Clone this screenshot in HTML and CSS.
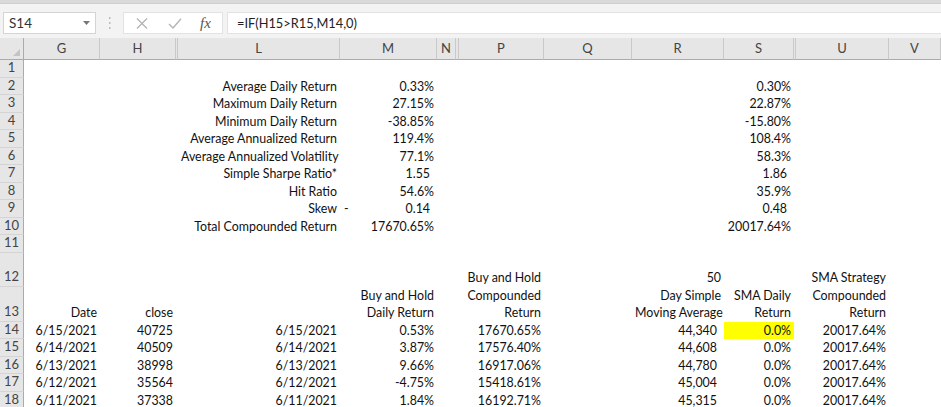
FILE: index.html
```html
<!DOCTYPE html>
<html lang="en">
<head>
    <meta charset="UTF-8">
    <title>SMA Strategy Backtest</title>
    <link rel="stylesheet" href="styles.css">
</head>
<body>
    <div class="ribbon-edge"></div>

    <div class="formula-bar">
        <div class="name-box">
            <span>S14</span>
            <svg class="caret" width="7" height="4" viewBox="0 0 7 4"><path d="M0 0h7L3.5 4z" fill="#777"/></svg>
        </div>
        <svg class="grip" width="3" height="12" viewBox="0 0 3 12">
            <rect x="1" y="0" width="1.5" height="2" fill="#bbb"/>
            <rect x="1" y="5" width="1.5" height="2" fill="#bbb"/>
            <rect x="1" y="10" width="1.5" height="2" fill="#bbb"/>
        </svg>
        <div class="fx-buttons">
            <svg width="12" height="11" viewBox="0 0 12 11"><path d="M1 0.5l10 10M11 0.5l-10 10" stroke="#b4b4b4" stroke-width="1.3" fill="none"/></svg>
            <svg width="14" height="11" viewBox="0 0 14 11"><path d="M1 6l4 4L13 0.8" stroke="#b4b4b4" stroke-width="1.4" fill="none"/></svg>
            <span class="fx">fx</span>
        </div>
        <div class="formula-input">=IF(H15&gt;R15,M14,0)</div>
    </div>

    <div class="sheet">
        <!-- column headers -->
        <div class="corner"><svg width="7" height="7" viewBox="0 0 7 7"><path d="M7 0v7H0z" fill="#c4c4c4"/></svg></div>
        <div class="col-head">G</div>
        <div class="col-head">H</div>
        <div class="col-head"></div>
        <div class="col-head">L</div>
        <div class="col-head">M</div>
        <div class="col-head">N</div>
        <div class="col-head"></div>
        <div class="col-head">P</div>
        <div class="col-head">Q</div>
        <div class="col-head">R</div>
        <div class="col-head">S</div>
        <div class="col-head"></div>
        <div class="col-head">U</div>
        <div class="col-head">V</div>

        <div class="row-head">1</div>

        <div class="row-head">2</div>
        <div class="c r col-l">Average Daily Return</div>
        <div class="c r col-m">0.33%</div>
        <div class="c r col-s">0.30%</div>

        <div class="row-head">3</div>
        <div class="c r col-l">Maximum Daily Return</div>
        <div class="c r col-m">27.15%</div>
        <div class="c r col-s">22.87%</div>

        <div class="row-head">4</div>
        <div class="c r col-l">Minimum Daily Return</div>
        <div class="c r col-m">-38.85%</div>
        <div class="c r col-s">-15.80%</div>

        <div class="row-head">5</div>
        <div class="c r col-l">Average Annualized Return</div>
        <div class="c r col-m">119.4%</div>
        <div class="c r col-s">108.4%</div>

        <div class="row-head">6</div>
        <div class="c r col-l">Average Annualized Volatility</div>
        <div class="c r col-m">77.1%</div>
        <div class="c r col-s">58.3%</div>

        <div class="row-head">7</div>
        <div class="c r col-l">Simple Sharpe Ratio*</div>
        <div class="c r pad col-m">1.55</div>
        <div class="c r pad col-s">1.86</div>

        <div class="row-head">8</div>
        <div class="c r col-l">Hit Ratio</div>
        <div class="c r col-m">54.6%</div>
        <div class="c r col-s">35.9%</div>

        <div class="row-head">9</div>
        <div class="c r col-l">Skew</div>
        <div class="c split pad col-m"><span>-</span><span>0.14</span></div>
        <div class="c r pad col-s">0.48</div>

        <div class="row-head">10</div>
        <div class="c r col-l">Total Compounded Return</div>
        <div class="c r col-m">17670.65%</div>
        <div class="c r col-s">20017.64%</div>

        <div class="row-head">11</div>

        <div class="row-head">12</div>
        <div class="c r col-p">Buy and Hold</div>
        <div class="c r col-r">50</div>
        <div class="c r col-u">SMA Strategy</div>

        <div class="row-head">13</div>
        <div class="c r col-g">Date</div>
        <div class="c r col-h">close</div>
        <div class="c r col-m">Buy and Hold<br>Daily Return</div>
        <div class="c r col-p">Compounded<br>Return</div>
        <div class="c r col-r">Day Simple<br>Moving Average</div>
        <div class="c r col-s">SMA Daily<br>Return</div>
        <div class="c r col-u">Compounded<br>Return</div>

        <div class="row-head">14</div>
        <div class="c r col-g">6/15/2021</div>
        <div class="c r col-h">40725</div>
        <div class="c r col-l">6/15/2021</div>
        <div class="c r col-m">0.53%</div>
        <div class="c r col-p">17670.65%</div>
        <div class="c r pad col-r">44,340</div>
        <div class="c r col-s selected">0.0%</div>
        <div class="c r col-u">20017.64%</div>

        <div class="row-head">15</div>
        <div class="c r col-g">6/14/2021</div>
        <div class="c r col-h">40509</div>
        <div class="c r col-l">6/14/2021</div>
        <div class="c r col-m">3.87%</div>
        <div class="c r col-p">17576.40%</div>
        <div class="c r pad col-r">44,608</div>
        <div class="c r col-s">0.0%</div>
        <div class="c r col-u">20017.64%</div>

        <div class="row-head">16</div>
        <div class="c r col-g">6/13/2021</div>
        <div class="c r col-h">38998</div>
        <div class="c r col-l">6/13/2021</div>
        <div class="c r col-m">9.66%</div>
        <div class="c r col-p">16917.06%</div>
        <div class="c r pad col-r">44,780</div>
        <div class="c r col-s">0.0%</div>
        <div class="c r col-u">20017.64%</div>

        <div class="row-head">17</div>
        <div class="c r col-g">6/12/2021</div>
        <div class="c r col-h">35564</div>
        <div class="c r col-l">6/12/2021</div>
        <div class="c r col-m">-4.75%</div>
        <div class="c r col-p">15418.61%</div>
        <div class="c r pad col-r">45,004</div>
        <div class="c r col-s">0.0%</div>
        <div class="c r col-u">20017.64%</div>

        <div class="row-head">18</div>
        <div class="c r col-g">6/11/2021</div>
        <div class="c r col-h">37338</div>
        <div class="c r col-l">6/11/2021</div>
        <div class="c r col-m">1.84%</div>
        <div class="c r col-p">16192.71%</div>
        <div class="c r pad col-r">45,315</div>
        <div class="c r col-s">0.0%</div>
        <div class="c r col-u">20017.64%</div>
    </div>
</body>
</html>
```

FILE: styles.css
```css
body {
    margin: 0;
    background: #fff;
    font-family: Lato, "Liberation Sans", sans-serif;
    color: #111;
    overflow: hidden;
}

.ribbon-edge {
    height: 3px;
    background: #d9d9d9;
    border-bottom: 1px solid #cfcfcf;
}

/* formula bar */
.formula-bar {
    display: flex;
    align-items: center;
    height: 34px;
    box-sizing: border-box;
    padding: 8px 0 4px 3px;
    background: #f3f3f3;
}
.name-box {
    display: flex;
    align-items: center;
    justify-content: space-between;
    width: 93px;
    height: 22px;
    box-sizing: border-box;
    padding: 0 5px 0 5px;
    background: #fff;
    border: 1px solid #d4d4d4;
    font-size: 13.5px;
    color: #333;
}
.grip {
    margin: 0 12px 0 12px;
}
.fx-buttons {
    display: flex;
    align-items: center;
    gap: 20px;
    width: 100px;
    height: 22px;
    box-sizing: border-box;
    padding-left: 12px;
    background: #fff;
    border: 1px solid #e2e2e2;
}
.fx {
    font-family: "Liberation Serif", serif;
    font-style: italic;
    font-size: 15px;
    color: #555;
    margin-left: -2px;
}
.formula-input {
    flex: 1;
    height: 22px;
    box-sizing: border-box;
    margin-left: 4px;
    padding-left: 9px;
    line-height: 20px;
    background: #fff;
    border: 1px solid #e2e2e2;
    border-right: none;
    font-size: 12.8px;
    color: #222;
}

/* grid */
.sheet {
    display: grid;
    grid-template-columns: 24px 76px 76px 2px 162px 97px 19px 3px 85px 88px 92px 70px 2px 93px 1fr;
    grid-template-rows: 22px repeat(11, 17.5px) 34px 35px repeat(5, 17.5px);
    font-size: 12.4px;
}
.corner,
.col-head {
    background: #e6e6e6;
    border-right: 1px solid #c9c9c9;
    border-bottom: 1px solid #ababab;
    box-sizing: border-box;
}
.corner {
    display: flex;
    align-items: flex-end;
    justify-content: flex-end;
    padding: 0 3px 3px 0;
    border-right-color: #ababab;
}
.col-head {
    text-align: center;
    line-height: 21px;
    font-size: 13px;
    color: #444;
}
.row-head {
    grid-column: 1;
    display: flex;
    align-items: flex-end;
    justify-content: center;
    line-height: 17.5px;
    font-size: 13px;
    background: #e6e6e6;
    border-right: 1px solid #ababab;
    border-bottom: 1px solid #d4d4d4;
    box-sizing: border-box;
    color: #444;
}

.c {
    align-self: end;
    min-width: 0;
    padding: 0 3px;
    line-height: 17.5px;
    white-space: nowrap;
}
.r {
    text-align: right;
}
.pad {
    padding-right: 7px;
}
.split {
    display: flex;
    justify-content: space-between;
    padding-left: 4px;
}
.selected {
    background: #ffff00;
    height: 17.5px;
}

.col-g { grid-column: 2; }
.col-h { grid-column: 3; }
.col-l { grid-column: 5; }
.col-m { grid-column: 6; }
.col-p { grid-column: 9; }
.col-r { grid-column: 11; }
.col-s { grid-column: 12; }
.col-u { grid-column: 14; }
```
